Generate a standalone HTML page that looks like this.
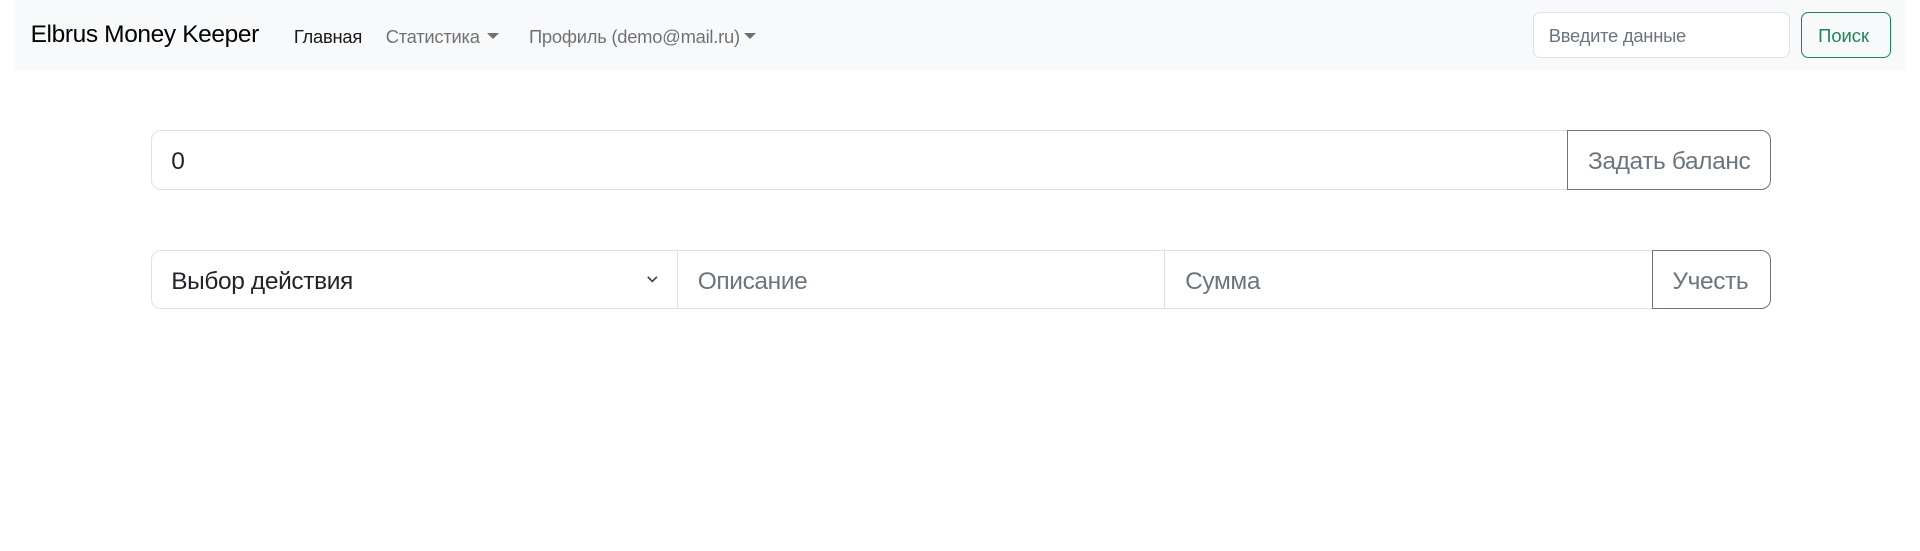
<!DOCTYPE html>
<html><head><meta charset="utf-8"><style>
*{box-sizing:border-box;margin:0;padding:0}
html,body{width:1920px;height:551px;background:#fff;overflow:hidden}
#w{zoom:1.2245;width:1568px;height:450px;position:relative;font-family:"Liberation Sans",sans-serif;color:#212529}
.nav{position:absolute;left:12px;top:0;width:1544px;height:57px;background:#f8f9fa}
.a{position:absolute;white-space:nowrap}
.brand{left:13px;top:17px;font-size:20px;color:#000;letter-spacing:-0.3px}
.l{top:21px;font-size:15px;color:rgba(0,0,0,.55);letter-spacing:-0.2px}
.car{display:inline-block;width:0;height:0;border-left:5px solid transparent;border-right:5px solid transparent;border-top:5px solid currentColor;vertical-align:3px;margin-left:6px}
.box{position:absolute;border:1px solid #dee2e6;background:#fff}
.ph{position:absolute;font-size:20px;color:#6c757d;top:14px;letter-spacing:-0.3px}
</style></head><body><div id="w">
<div class="nav">
<div class="a brand">Elbrus Money Keeper</div>
<div class="a l" style="left:228px;color:rgba(0,0,0,.9)">Главная</div>
<div class="a l" style="left:303px">Статистика<span class="car"></span></div>
<div class="a l" style="left:420px">Профиль (demo@mail.ru)<span class="car" style="margin-left:3px"></span></div>
<div class="box" style="left:1240px;top:10px;width:210px;height:37px;border-radius:6px"><span class="a" style="left:12px;top:10px;font-size:15px;color:#6c757d;letter-spacing:-0.2px">Введите данные</span></div>
<div class="box" style="left:1459px;top:10px;width:73px;height:37px;border-radius:6px;border-color:#198754;background:transparent"><span class="a" style="left:13px;top:10px;font-size:15px;color:#198754">Поиск</span></div>
</div>
<div class="box" style="left:123px;top:106px;width:1158px;height:49px;border-radius:8px 0 0 8px"><span class="a" style="left:16px;top:14px;font-size:20px;color:#212529">0</span></div>
<div class="box" style="left:1280px;top:106px;width:166px;height:49px;border-radius:0 8px 8px 0;border-color:#6c757d"><span class="ph" style="left:16px">Задать баланс</span></div>
<div class="box" style="left:123px;top:204px;width:431px;height:48px;border-radius:8px 0 0 8px"><span class="ph" style="left:16px;color:#212529">Выбор действия</span>
<svg class="a" style="left:403px;top:18px" width="12" height="10" viewBox="0 0 16 16"><path d="M2 5l6 6 6-6" fill="none" stroke="#343a40" stroke-width="2"/></svg></div>
<div class="box" style="left:553px;top:204px;width:399px;height:48px"><span class="ph" style="left:16px">Описание</span></div>
<div class="box" style="left:951px;top:204px;width:399px;height:48px"><span class="ph" style="left:16px">Сумма</span></div>
<div class="box" style="left:1349px;top:204px;width:97px;height:48px;border-radius:0 8px 8px 0;border-color:#6c757d"><span class="ph" style="left:16px">Учесть</span></div>
</div></body></html>
